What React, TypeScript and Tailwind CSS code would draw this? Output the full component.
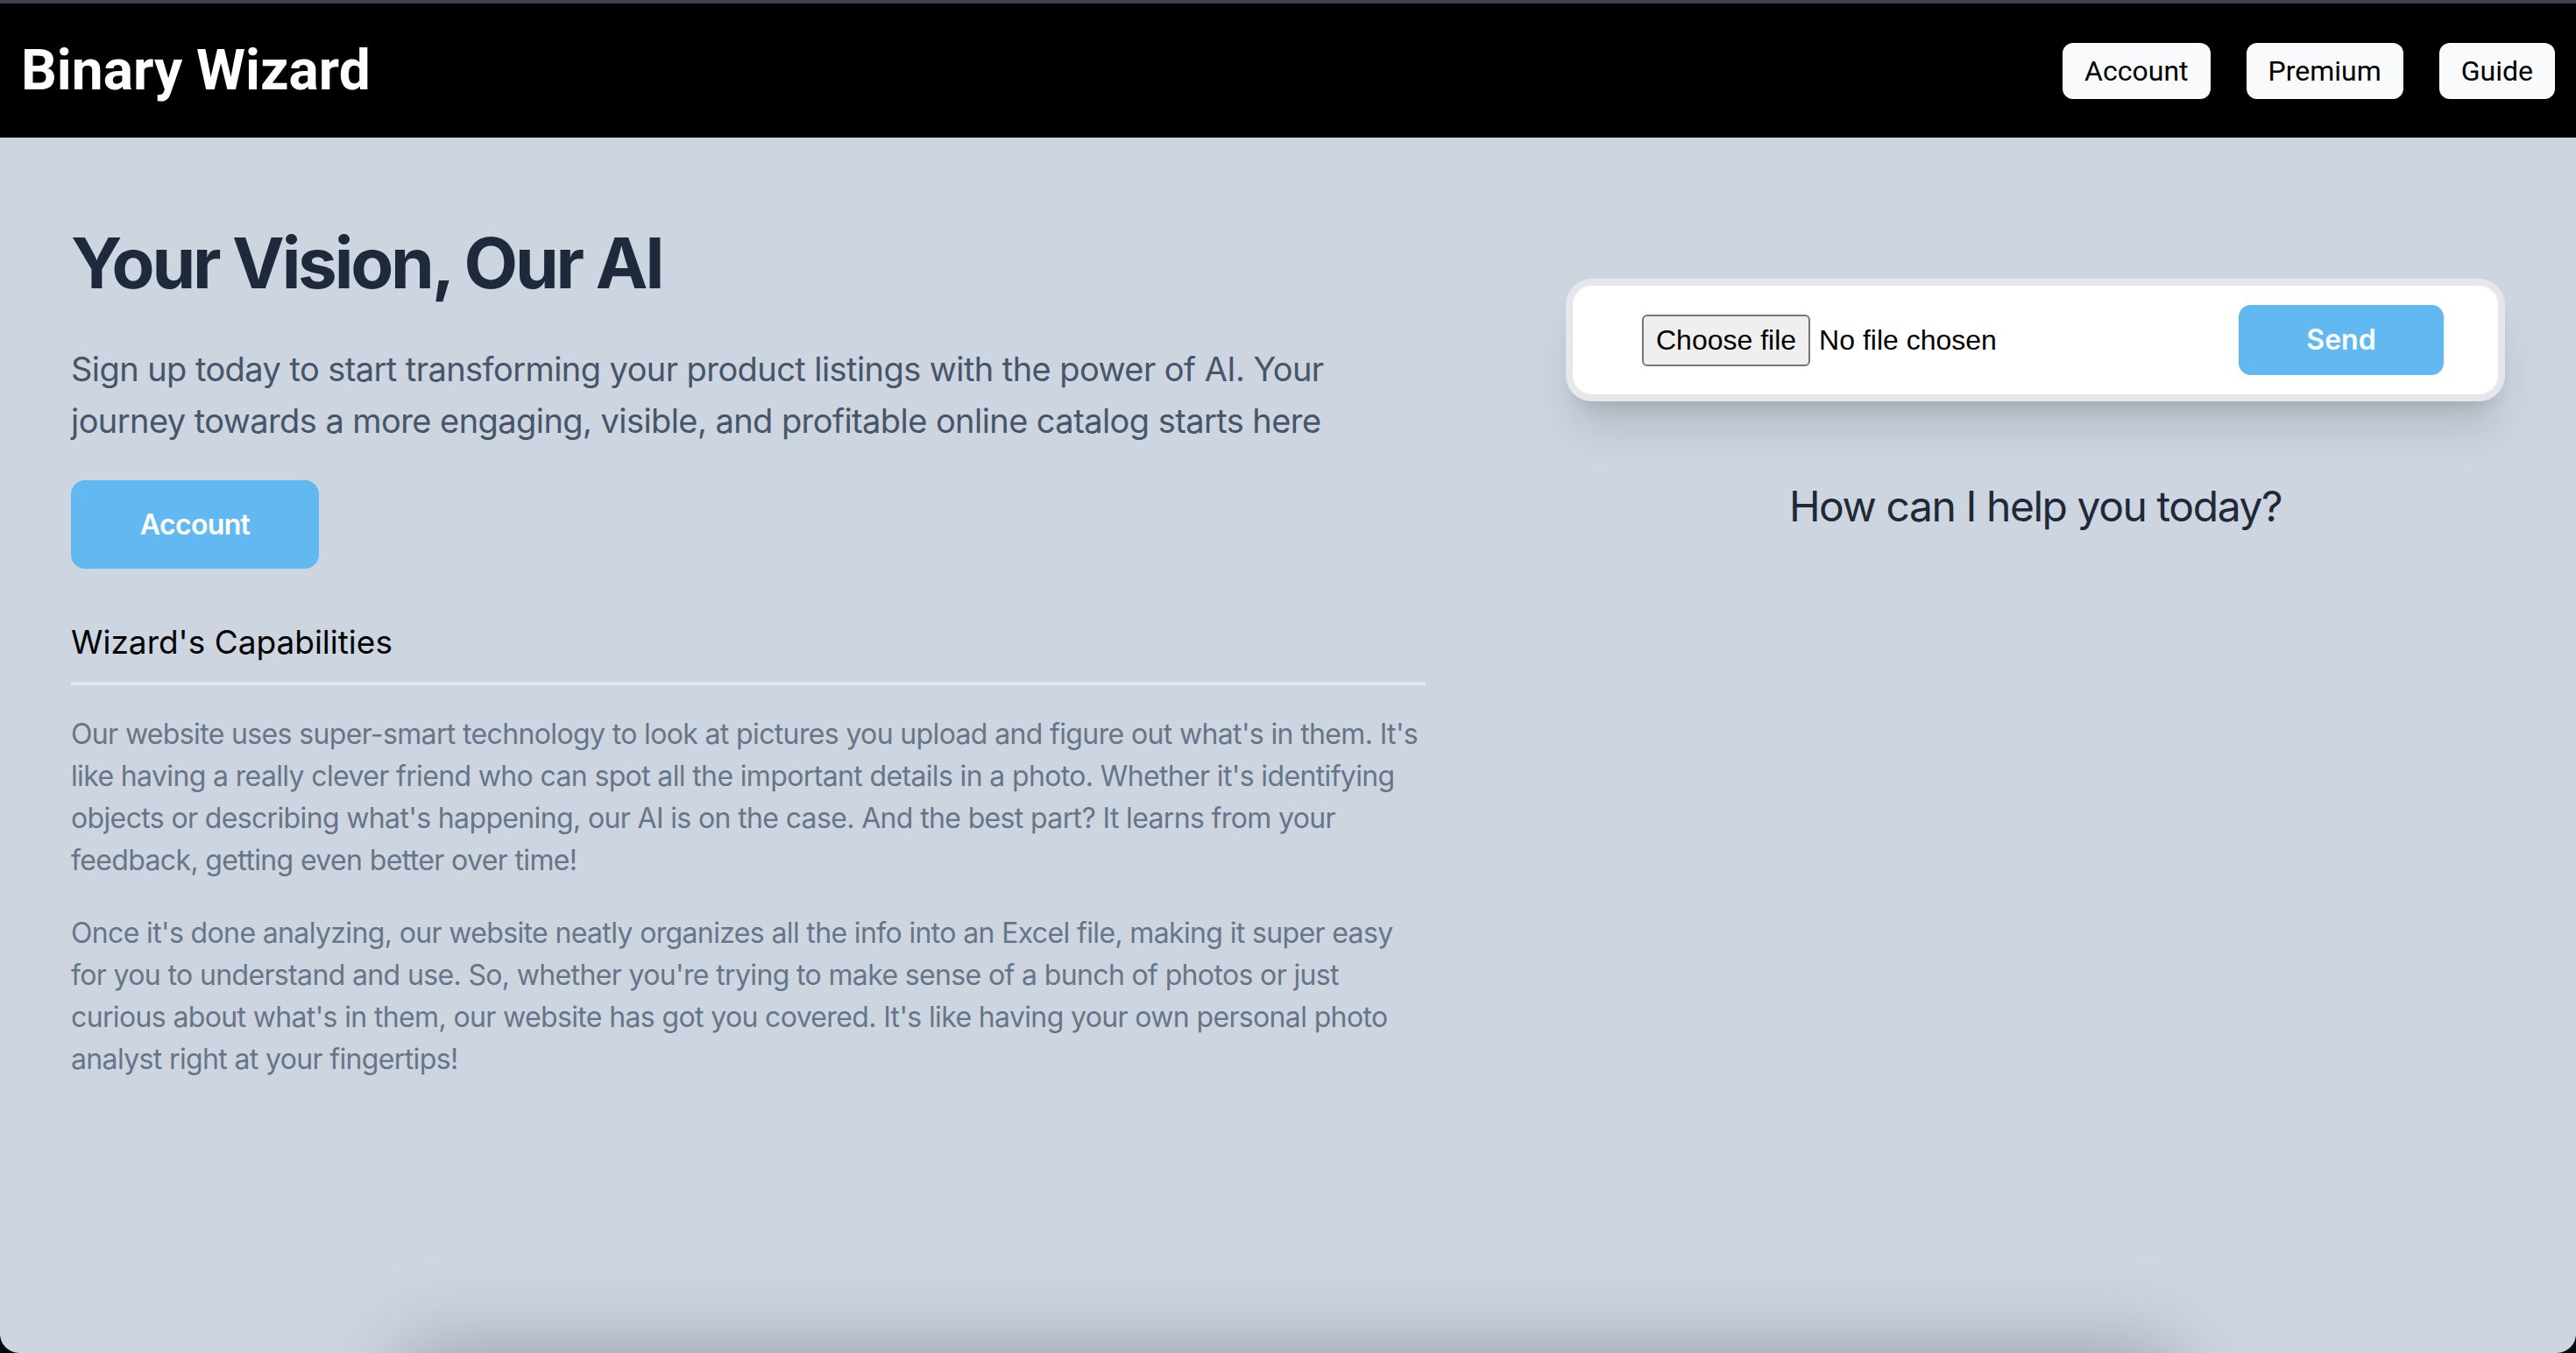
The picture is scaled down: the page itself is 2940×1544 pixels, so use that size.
import { FC } from 'react';

const NavButton: FC<{ label: string }> = ({ label }) => (
  <button className="h-[64px] px-[25px] rounded-[12px] bg-[#f9fafb] text-black text-[32px] leading-[48px] font-[Roboto,sans-serif]">
    {label}
  </button>
);

const App: FC = () => {
  return (
    <div className="h-[1544px] overflow-hidden bg-[#08080d]">
      <div className="h-[1544px] overflow-hidden rounded-b-[22px] bg-[#cdd5e0] flex flex-col font-[Inter,sans-serif]">
        <div className="h-[4px] shrink-0 bg-[#3d424b]" />
        <header className="h-[153px] shrink-0 bg-black flex items-center justify-between px-[24px]">
          <h1 className="text-white text-[64px] font-bold font-[Roboto,sans-serif]">Binary Wizard</h1>
          <nav className="flex gap-[41px]">
            <NavButton label="Account" />
            <NavButton label="Premium" />
            <NavButton label="Guide" />
          </nav>
        </header>

        <main className="h-[1387px] shrink-0 flex justify-between px-[81px]">
          <section className="w-[1546px] pt-[103px]">
            <h2 className="text-[80px] leading-[80px] font-bold text-[#1e293b] tracking-[-0.04em]">Your Vision, Our AI</h2>
            <p className="mt-[52px] text-[38px] leading-[59px] text-[#475569] tracking-[-0.015em]">
              Sign up today to start transforming your product listings with the power of AI. Your journey towards a
              more engaging, visible, and profitable online catalog starts here
            </p>
            <button className="mt-[38px] h-[101px] w-[283px] rounded-[16px] bg-[#62b9f2] text-white text-[32px] font-semibold tracking-[-0.02em]">
              Account
            </button>
            <h3 className="mt-[56px] text-[37px] leading-[56px] text-black">Wizard's Capabilities</h3>
            <div className="mt-[17px] h-[4px] bg-[#e4e7eb]" />
            <div className="mt-[32px] flex flex-col gap-[35px] text-[32px] leading-[48px] text-[#677589] tracking-[-0.02em]">
              <p>
                Our website uses super-smart technology to look at pictures you upload and figure out what's in them.
                It's like having a really clever friend who can spot all the important details in a photo. Whether it's
                identifying objects or describing what's happening, our AI is on the case. And the best part? It learns
                from your feedback, getting even better over time!
              </p>
              <p>
                Once it's done analyzing, our website neatly organizes all the info into an Excel file, making it super
                easy for you to understand and use. So, whether you're trying to make sense of a bunch of photos or just
                curious about what's in them, our website has got you covered. It's like having your own personal photo
                analyst right at your fingertips!
              </p>
            </div>
          </section>

          <section className="w-[1072px] pt-[161px] flex flex-col items-center">
            <div className="w-full rounded-[30px] border-[8px] border-[#e5e7eb] bg-white shadow-[0_40px_50px_-10px_rgba(0,0,0,0.12),0_16px_20px_-12px_rgba(0,0,0,0.12)]">
              <form className="h-[124px] flex items-center justify-between pl-[79px] pr-[62px]">
                <label className="flex items-center font-['Liberation_Sans',Arial,sans-serif] text-[32px] text-black cursor-pointer">
                  <input type="file" className="hidden" />
                  <span className="h-[59px] px-[14px] flex items-center border-2 border-[#767676] rounded-[6px] bg-[#efefef]">
                    Choose file
                  </span>
                  <span className="ml-[10px]">No file chosen</span>
                </label>
                <button type="button" className="h-[80px] w-[234px] rounded-[14px] bg-[#62b9f2] text-white text-[32px] font-semibold">
                  Send
                </button>
              </form>
            </div>
            <p className="mt-[88px] text-[48px] leading-[64px] text-[#1f2937] tracking-[-0.03em]">How can I help you today?</p>
          </section>
        </main>

        <div className="mx-auto w-[2020px] h-[300px] shrink-0 bg-[#cdd5e0] shadow-[0_0_90px_rgba(0,0,0,0.28)]" />
      </div>
    </div>
  );
};

export default App;
